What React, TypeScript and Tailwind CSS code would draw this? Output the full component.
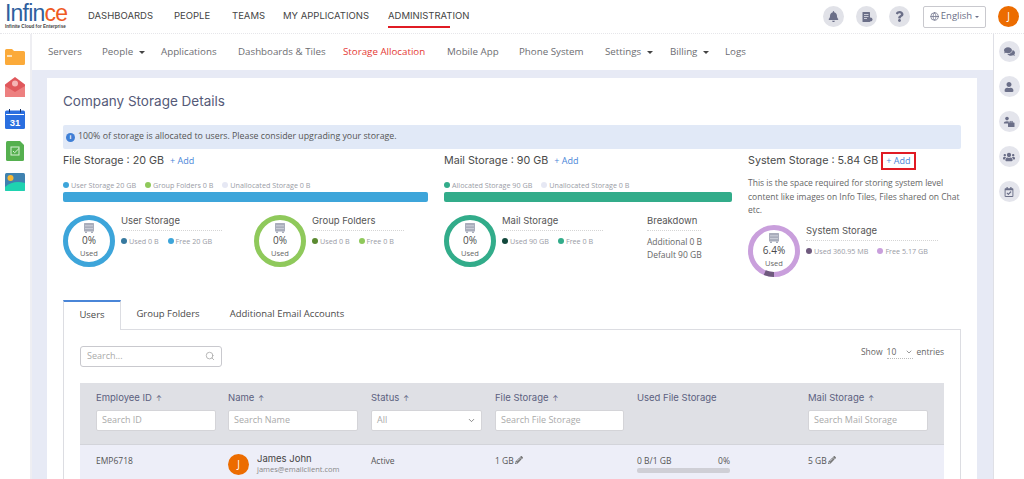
import { FaBell, FaQuestion, FaComments, FaUser, FaUsers, FaRegCalendarCheck, FaPencilAlt } from "react-icons/fa";
import { FiGlobe, FiSearch, FiChevronDown } from "react-icons/fi";

const heading = "font-['Inter',sans-serif]";

function Dot({ color }: { color: string }) {
  return <span className={`inline-block w-[6px] h-[6px] rounded-full shrink-0 ${color}`} />;
}

function Legend({ items }: { items: { color: string; label: string }[] }) {
  return (
    <div className="flex gap-[9px] text-[7.2px] leading-[10px] text-[#9a9ca6] whitespace-nowrap">
      {items.map((item) => (
        <span key={item.label} className="flex items-center gap-[2px]">
          <Dot color={item.color} />
          {item.label}
        </span>
      ))}
    </div>
  );
}

function Donut({ color, value, arc }: { color: string; value: string; arc?: number }) {
  const c = 2 * Math.PI * 23.5;
  return (
    <div className="relative w-[52px] h-[52px] shrink-0">
      <svg width="52" height="52" viewBox="0 0 52 52">
        <circle cx="26" cy="26" r="23.5" fill="none" stroke={color} strokeWidth="5" />
        {arc ? (
          <circle
            cx="26"
            cy="26"
            r="23.5"
            fill="none"
            stroke="#6f5a7e"
            strokeWidth="5"
            strokeDasharray={`${c * arc} ${c}`}
            transform="rotate(90 26 26)"
          />
        ) : null}
      </svg>
      <div className="absolute inset-0 flex flex-col items-center pt-[8px]">
        <svg width="10" height="10" viewBox="0 0 10 10">
          <rect x="0" y="0" width="10" height="8.5" rx="0.5" fill="#a9adbb" />
          <path d="M1 2.8h8M1 5.6h8" stroke="#e4e6ee" strokeWidth="0.6" />
          <rect x="1" y="8.5" width="2" height="1.5" fill="#a9adbb" />
          <rect x="7" y="8.5" width="2" height="1.5" fill="#a9adbb" />
        </svg>
        <span className="text-[10px] leading-[13px] mt-[1px] text-[#4a4a4a]">{value}</span>
        <span className="text-[7.5px] leading-[10px] mt-[1px] text-[#666]">Used</span>
      </div>
    </div>
  );
}

function StorageStat({
  title,
  color,
  value,
  usedColor,
  freeColor,
  used,
  free,
  width,
  arc,
}: {
  title: string;
  color: string;
  value: string;
  usedColor: string;
  freeColor: string;
  used: string;
  free: string;
  width: string;
  arc?: number;
}) {
  return (
    <div className="flex gap-[6px]">
      <Donut color={color} value={value} arc={arc} />
      <div className={width}>
        <div className={`${heading} text-[9.5px] leading-[12px] pb-[3px] text-[#555] border-b border-dotted border-[#d5d5d5]`}>
          {title}
        </div>
        <div className="mt-[5px]">
          <Legend
            items={[
              { color: usedColor, label: used },
              { color: freeColor, label: free },
            ]}
          />
        </div>
      </div>
    </div>
  );
}

function SectionTitle({ label, boxed }: { label: string; boxed?: boolean }) {
  return (
    <div className="flex items-center h-[18px]">
      <span className={`${heading} text-[10.75px] text-[#4a4a4a]`}>{label}</span>
      <span
        className={
          boxed
            ? "ml-[3px] px-[3px] h-[18px] flex items-center border-[2px] border-[#e01b24] text-[9px] text-[#4a86d8]"
            : "ml-[6px] text-[9px] text-[#4a86d8]"
        }
      >
        + Add
      </span>
    </div>
  );
}

function HeaderCell({ label, sortable }: { label: string; sortable?: boolean }) {
  return (
    <div className={`${heading} text-[9.5px] leading-[12px] h-[12px] text-[#5c6080]`}>
      {label}
      {sortable ? <span className="ml-[4px] text-[7px]">↑</span> : null}
    </div>
  );
}

function FilterInput({ placeholder, className, select }: { placeholder: string; className: string; select?: boolean }) {
  return (
    <div className={`h-[21px] bg-white border border-[#d4d4d8] rounded-[2px] px-[5px] flex items-center justify-between text-[9px] text-[#aaa] ${className}`}>
      {placeholder}
      {select ? <FiChevronDown className="text-[9px] text-[#666]" /> : null}
    </div>
  );
}

function SideIcon({ children }: { children: React.ReactNode }) {
  return (
    <div className="w-[21px] h-[21px] rounded-full bg-[#e4e5ec] flex items-center justify-center text-[#6b6f88] text-[10px]">
      {children}
    </div>
  );
}

function TopIcon({ children }: { children: React.ReactNode }) {
  return (
    <div className="w-[21px] h-[21px] rounded-full bg-[#e1e2e8] flex items-center justify-center text-[#6b6f88] text-[11px]">
      {children}
    </div>
  );
}

export default function App() {
  const subNav = [
    { label: "Servers", w: "w-[54px]" },
    { label: "People", w: "w-[59px]", caret: true },
    { label: "Applications", w: "w-[77px]" },
    { label: "Dashboards & Tiles", w: "w-[105px]" },
    { label: "Storage Allocation", w: "w-[104px]", active: true },
    { label: "Mobile App", w: "w-[72px]" },
    { label: "Phone System", w: "w-[86px]" },
    { label: "Settings", w: "w-[65px]", caret: true },
    { label: "Billing", w: "w-[55px]", caret: true },
    { label: "Logs", w: "w-[30px]" },
  ];

  return (
    <div className="w-[1024px] h-[479px] overflow-hidden bg-white flex flex-col font-['Open_Sans',sans-serif]">
      <header className="h-[34px] shrink-0 flex items-center border-b border-dotted border-[#e6e6ea]">
        <div className="w-[88px] pl-[5px] flex flex-col">
          <div className="text-[23px] leading-[19px] tracking-[-0.8px] font-['Liberation_Sans',sans-serif] font-light">
            <span className="text-[#2f5f9e]">Infin</span>
            <span className="text-[#ef5a24]">ce</span>
          </div>
          <div className="text-[4.6px] leading-[6px] mt-[1px] text-[#444] font-['Liberation_Sans',sans-serif] font-bold whitespace-nowrap">
            Infinite Cloud for Enterprise
          </div>
        </div>
        <nav className={`${heading} flex text-[9.5px] text-[#444] h-[34px] items-center`}>
          <span className="w-[86px]">DASHBOARDS</span>
          <span className="w-[58px]">PEOPLE</span>
          <span className="w-[51px]">TEAMS</span>
          <span className="w-[105px]">MY APPLICATIONS</span>
          <span className="relative">
            ADMINISTRATION
            <span className="absolute left-0 top-[17px] w-[62px] h-[2px] bg-[#e01b24]" />
          </span>
        </nav>
        <div className="ml-auto flex items-center">
          <div className="flex gap-[12px] mr-[13px]">
            <TopIcon>
              <FaBell />
            </TopIcon>
            <TopIcon>
              <svg width="12" height="12" viewBox="0 0 12 12" fill="none">
                <rect x="1.5" y="1" width="7.5" height="10" rx="0.5" fill="#6b6f88" />
                <path d="M3 3.5h4.5M3 5.5h4.5M3 7.5h3" stroke="#e1e2e8" strokeWidth="0.8" />
                <circle cx="9.5" cy="8.5" r="2" fill="#6b6f88" />
              </svg>
            </TopIcon>
            <TopIcon>
              <FaQuestion />
            </TopIcon>
          </div>
          <div className="w-[63px] h-[22px] border border-[#c9c9ce] rounded-[2px] flex items-center justify-center gap-[2px] text-[9.5px] text-[#6b6f88]">
            <FiGlobe className="text-[9px]" />
            English
            <span className="w-0 h-0 border-x-[2px] border-x-transparent border-t-[2px] border-t-[#6b6f88] ml-[1px]" />
          </div>
          <div className="w-[21px] h-[21px] rounded-full bg-[#ec6c00] text-white text-[10px] flex items-center justify-center ml-[12px] mr-[5px]">
            J
          </div>
        </div>
      </header>

      <div className="flex flex-1 min-h-0">
        <aside className="w-[32px] shrink-0 border-r-2 border-[#eeeef2] flex flex-col items-center gap-[12px] pt-[15px]">
          <svg width="20" height="16" viewBox="0 0 20 16">
            <path d="M0 1.5Q0 0 1.5 0H7l2 2h9.5Q20 2 20 3.5V14.5Q20 16 18.5 16H1.5Q0 16 0 14.5Z" fill="#fbaa3a" />
            <rect x="2" y="6" width="5" height="2" fill="#fde2b8" />
          </svg>
          <svg width="20" height="20" viewBox="0 0 20 20">
            <path d="M0 7.5 10 0l10 7.5V20H0Z" fill="#e0585c" />
            <circle cx="10" cy="6.5" r="3" fill="#f5b5b5" />
            <path d="M0 9 10 15 20 9V20H0Z" fill="#ed8080" />
          </svg>
          <svg width="20" height="20" viewBox="0 0 20 20">
            <rect y="1.5" width="20" height="18.5" rx="1.5" fill="#2a6fe0" />
            <rect x="1" y="5" width="18" height="1" fill="#fff" />
            <rect x="4" y="0" width="1" height="3.5" fill="#16346b" />
            <rect x="15" y="0" width="1" height="3.5" fill="#16346b" />
            <text x="10" y="16.5" textAnchor="middle" fontSize="9.5" fontWeight="700" fill="#fff" fontFamily="Liberation Sans">31</text>
          </svg>
          <svg width="18" height="20" viewBox="0 0 18 20">
            <path d="M1.5 0H14l4 4v14.5Q18 20 16.5 20H1.5Q0 20 0 18.5V1.5Q0 0 1.5 0Z" fill="#55b04f" />
            <rect x="5" y="6" width="8" height="8" fill="none" stroke="#d8efd5" strokeWidth="1" />
            <path d="M7 10l1.7 1.7L13 7.5" fill="none" stroke="#d8efd5" strokeWidth="1" />
          </svg>
          <svg width="20" height="18" viewBox="0 0 20 18">
            <rect width="20" height="18" rx="1.5" fill="#3f82b0" />
            <circle cx="5.5" cy="5" r="3" fill="#f7b733" />
            <path d="M0 14Q8 7 20 10V16.5Q20 18 18.5 18H1.5Q0 18 0 16.5Z" fill="#1fd3b0" />
          </svg>
        </aside>

        <main className="flex-1 min-w-0 flex flex-col">
          <nav className="h-[36px] shrink-0 flex items-center pl-[16px] text-[9.75px] text-[#6d6d72]">
            {subNav.map((item) => (
              <span key={item.label} className={`${item.w} shrink-0 flex items-center whitespace-nowrap ${item.active ? "text-[#e53935]" : ""}`}>
                {item.label}
                {item.caret ? (
                  <span className="ml-[6px] w-0 h-0 border-x-[3px] border-x-transparent border-t-[3px] border-t-[#444]" />
                ) : null}
              </span>
            ))}
          </nav>

          <div className="flex-1 min-h-0 bg-[#e7eaf5] pl-[15px] pr-[16px] pt-[8px] overflow-hidden">
            <div className="bg-white h-[500px] px-[16px] pt-[13px]">
              <h1 className={`${heading} text-[13.5px] leading-[20px] text-[#555a78]`}>Company Storage Details</h1>

              <div className="mt-[14px] h-[24px] bg-[#e1e9f7] rounded-[2px] px-[3px] flex items-center gap-[3px] text-[8.8px] text-[#555]">
                <span className="w-[9px] h-[9px] rounded-full bg-[#3f7fd6] text-white text-[6px] font-bold flex items-center justify-center">i</span>
                100% of storage is allocated to users. Please consider upgrading your storage.
              </div>

              <div className="flex mt-[3px]">
                <section className="w-[365px]">
                  <SectionTitle label="File Storage : 20 GB" />
                  <div className="mt-[10px]">
                    <Legend
                      items={[
                        { color: "bg-[#3da5da]", label: "User Storage 20 GB" },
                        { color: "bg-[#8fc95b]", label: "Group Folders 0 B" },
                        { color: "bg-[#e6e8f4]", label: "Unallocated Storage 0 B" },
                      ]}
                    />
                  </div>
                  <div className="h-[10px] rounded-[2px] bg-[#3da5da] mt-[2px]" />
                  <div className="flex mt-[13px] gap-[32px]">
                    <StorageStat title="User Storage" color="#3da5da" value="0%" usedColor="bg-[#36799f]" freeColor="bg-[#3da5da]" used="Used 0 B" free="Free 20 GB" width="w-[101px]" />
                    <StorageStat title="Group Folders" color="#8fc95b" value="0%" usedColor="bg-[#5b8a30]" freeColor="bg-[#8fc95b]" used="Used 0 B" free="Free 0 B" width="w-[92px]" />
                  </div>
                </section>

                <section className="w-[288px] ml-[16px]">
                  <SectionTitle label="Mail Storage : 90 GB" />
                  <div className="mt-[10px]">
                    <Legend
                      items={[
                        { color: "bg-[#32ac8a]", label: "Allocated Storage 90 GB" },
                        { color: "bg-[#e6e8f4]", label: "Unallocated Storage 0 B" },
                      ]}
                    />
                  </div>
                  <div className="h-[10px] rounded-[2px] bg-[#32ac8a] mt-[2px]" />
                  <div className="flex mt-[13px]">
                    <StorageStat title="Mail Storage" color="#32ac8a" value="0%" usedColor="bg-[#12483c]" freeColor="bg-[#32ac8a]" used="Used 90 GB" free="Free 0 B" width="w-[101px]" />
                    <div className="ml-[44px] w-[54px]">
                      <div className={`${heading} text-[9.5px] leading-[12px] pb-[3px] text-[#555] border-b border-dotted border-[#d5d5d5]`}>
                        Breakdown
                      </div>
                      <div className="mt-[4px] text-[8.5px] leading-[13px] text-[#666] whitespace-nowrap">
                        <div>Additional 0 B</div>
                        <div>Default 90 GB</div>
                      </div>
                    </div>
                  </div>
                </section>

                <section className="w-[213px] ml-[16px]">
                  <SectionTitle label="System Storage : 5.84 GB" boxed />
                  <p className="mt-[6px] text-[8.5px] leading-[13.5px] text-[#666]">
                    This is the space required for storing system level content like images on Info Tiles, Files shared on Chat etc.
                  </p>
                  <div className="mt-[8px]">
                    <StorageStat title="System Storage" color="#c99fdc" value="6.4%" usedColor="bg-[#6f5a7e]" freeColor="bg-[#c99fdc]" used="Used 360.95 MB" free="Free 5.17 GB" width="w-[132px]" arc={0.064} />
                  </div>
                </section>
              </div>

              <div className="mt-[23px] h-[30px] flex text-[9.5px] text-[#4a4a4a]">
                <div className="w-[58px] h-[30px] bg-white border border-[#dcdde2] border-t-2 border-t-[#4a86d8] border-b-0 flex items-center justify-center relative z-10">Users</div>
                <div className="w-[94px] flex items-center justify-center font-medium">Group Folders</div>
                <div className="w-[144px] flex items-center justify-center font-medium">Additional Email Accounts</div>
              </div>

              <div className="border border-[#dcdde2] -mt-px px-[16px] pt-[16px]">
                <div className="flex justify-between items-start">
                  <div className="w-[142px] h-[21px] border border-[#c9c9ce] rounded-[3px] px-[6px] flex items-center justify-between text-[9px] text-[#aaa]">
                    Search...
                    <FiSearch className="text-[10px]" />
                  </div>
                  <div className="flex items-center text-[8.5px] text-[#666] h-[14px]">
                    Show
                    <span className="ml-[4px] w-[26px] flex items-center justify-between border-b border-dotted border-[#bbb] mr-[4px]">
                      10
                      <FiChevronDown className="text-[8px]" />
                    </span>
                    entries
                  </div>
                </div>

                <div className="mt-[16px] bg-[#dfe0e5] h-[62px] pl-[16px] pt-[9px] grid grid-cols-[132px_143px_124px_142px_171px_120px] border-b border-[#d3d4da]">
                  <div>
                    <HeaderCell label="Employee ID" sortable />
                    <FilterInput placeholder="Search ID" className="mt-[6px] w-[120px]" />
                  </div>
                  <div>
                    <HeaderCell label="Name" sortable />
                    <FilterInput placeholder="Search Name" className="mt-[6px] w-[130px]" />
                  </div>
                  <div>
                    <HeaderCell label="Status" sortable />
                    <FilterInput placeholder="All" select className="mt-[6px] w-[111px]" />
                  </div>
                  <div>
                    <HeaderCell label="File Storage" sortable />
                    <FilterInput placeholder="Search File Storage" className="mt-[6px] w-[129px]" />
                  </div>
                  <div>
                    <HeaderCell label="Used File Storage" />
                  </div>
                  <div>
                    <HeaderCell label="Mail Storage" sortable />
                    <FilterInput placeholder="Search Mail Storage" className="mt-[6px] w-[120px]" />
                  </div>
                </div>

                <div className="bg-[#edeef8] h-[40px] pl-[16px] pt-[9px] grid grid-cols-[132px_143px_124px_142px_171px_120px] text-[8.5px] leading-[13px] text-[#555]">
                  <div>EMP6718</div>
                  <div className="flex gap-[8px]">
                    <div className="w-[21px] h-[21px] rounded-full bg-[#ec6c00] text-white text-[10px] flex items-center justify-center">J</div>
                    <div>
                      <div className={`${heading} text-[9.5px] leading-[12px] text-[#444] -mt-[1px]`}>James John</div>
                      <div className="text-[7.5px] leading-[11px] text-[#888] -mt-[1px]">james@emailclient.com</div>
                    </div>
                  </div>
                  <div>Active</div>
                  <div className="flex items-center h-[13px] gap-[1px]">
                    1 GB
                    <FaPencilAlt className="text-[8px] text-[#777]" />
                  </div>
                  <div className="w-[93px]">
                    <div className="flex justify-between">
                      <span>0 B/1 GB</span>
                      <span>0%</span>
                    </div>
                    <div className="h-[5px] bg-[#cfcfd6] rounded-[2px] mt-[1px]" />
                  </div>
                  <div className="flex items-center h-[13px] gap-[1px]">
                    5 GB
                    <FaPencilAlt className="text-[8px] text-[#777]" />
                  </div>
                </div>
              </div>
            </div>
          </div>
        </main>

        <aside className="w-[31px] shrink-0 border-l border-[#dfe0e6] flex flex-col items-center gap-[14px] pt-[7px]">
          <SideIcon>
            <FaComments className="text-[11px]" />
          </SideIcon>
          <SideIcon>
            <FaUser />
          </SideIcon>
          <SideIcon>
            <svg width="12" height="12" viewBox="0 0 12 12" fill="#6b6f88">
              <circle cx="4" cy="2.6" r="1.8" />
              <path d="M0.8 7.5Q0.8 5.3 4 5.3 5.5 5.3 6.2 5.8L5 7.5Z" />
              <rect x="5" y="6.5" width="6.5" height="4.5" rx="0.6" />
              <rect x="7" y="5.3" width="2.5" height="1.5" fill="none" stroke="#6b6f88" strokeWidth="0.7" />
            </svg>
          </SideIcon>
          <SideIcon>
            <FaUsers className="text-[12px]" />
          </SideIcon>
          <SideIcon>
            <FaRegCalendarCheck />
          </SideIcon>
        </aside>
      </div>
    </div>
  );
}
